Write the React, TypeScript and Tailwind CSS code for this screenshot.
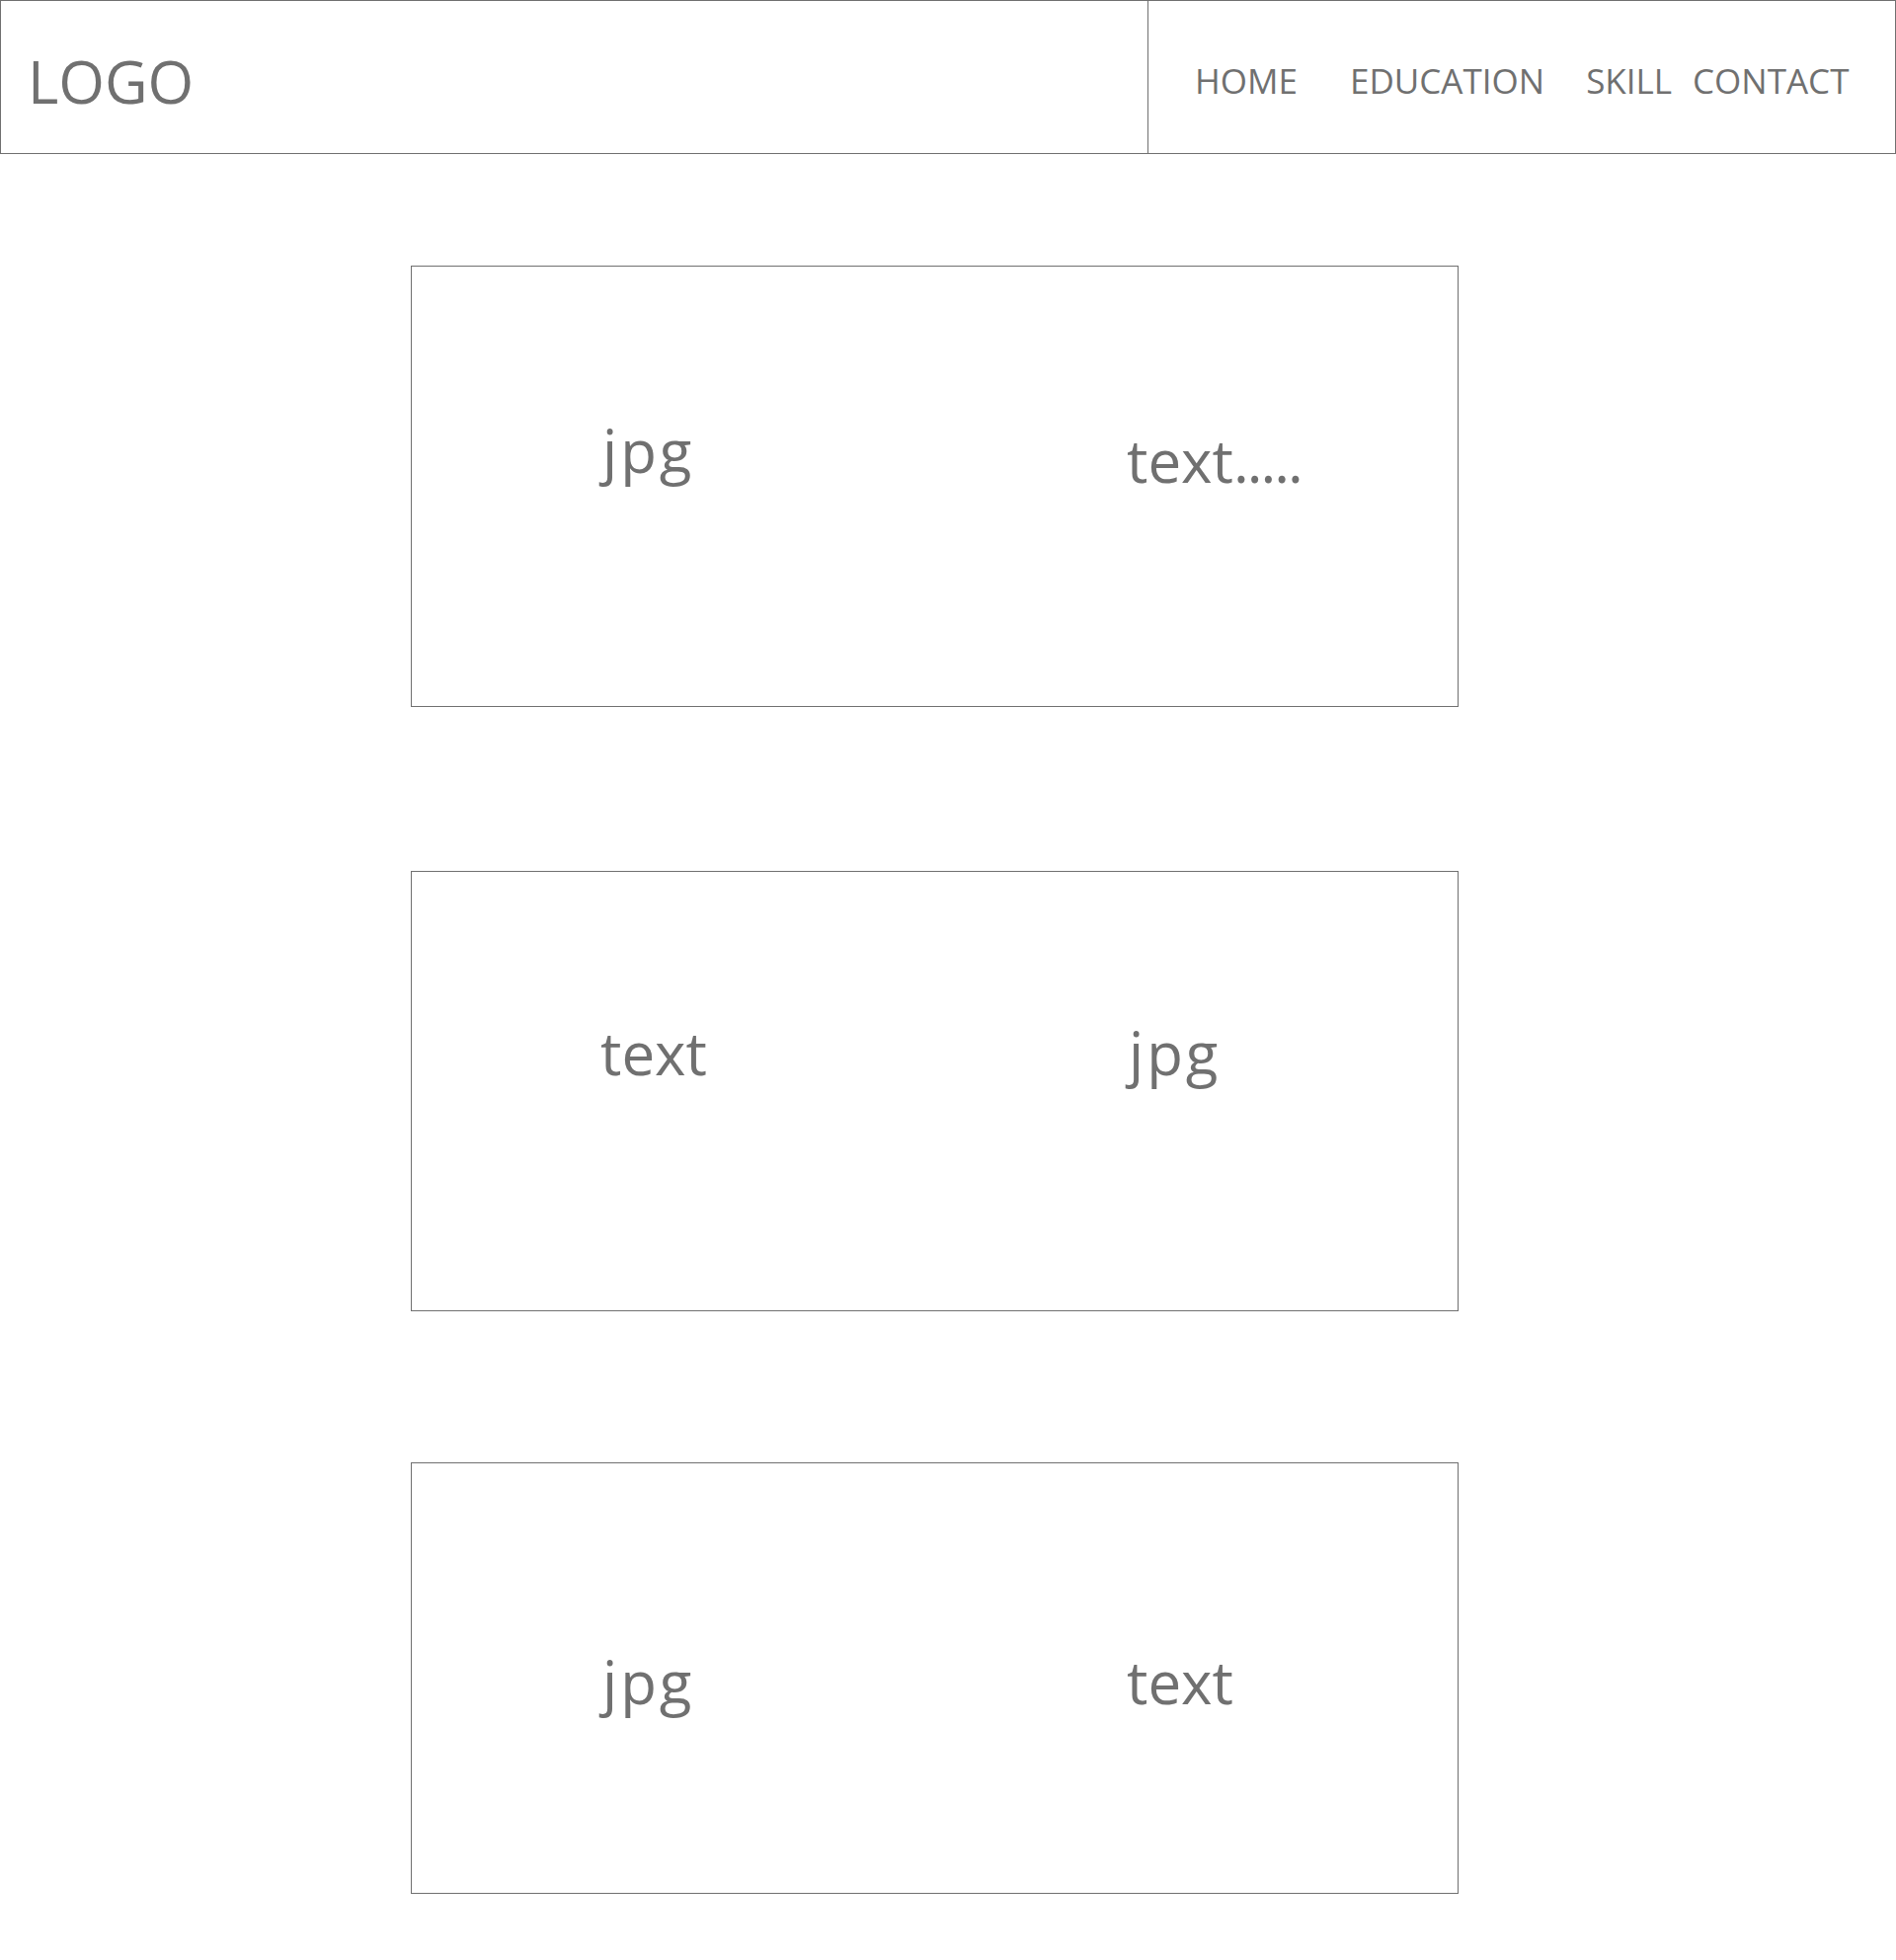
const navItems = [
  { label: "HOME", className: "ml-[47px]" },
  { label: "EDUCATION", className: "ml-[53px]" },
  { label: "SKILL", className: "ml-[42px]" },
  { label: "CONTACT", className: "ml-[21px]" },
];

type Block = {
  left: string;
  right: string;
  leftTop: string;
  rightTop: string;
  height: string;
  margin: string;
};

const blocks: Block[] = [
  { left: "jpg", right: "text.....", leftTop: "mt-[156px]", rightTop: "mt-[166px]", height: "h-[447px]", margin: "mt-[113px]" },
  { left: "text", right: "jpg", leftTop: "mt-[153px]", rightTop: "mt-[153px]", height: "h-[446px]", margin: "mt-[166px]" },
  { left: "jpg", right: "text", leftTop: "mt-[191px]", rightTop: "mt-[191px]", height: "h-[437px]", margin: "mt-[153px]" },
];

// renders "jpg" a bit wider and the trailing dots a bit tighter, like the mockup
const Label = ({ value }: { value: string }) => {
  if (value === "jpg") return <span className="ml-[2px] tracking-[3px]">jpg</span>;
  const dots = value.match(/\.+$/)?.[0] ?? "";
  const word = value.slice(0, value.length - dots.length);
  return (
    <span>
      {word}
      {dots && <span className="tracking-[-2px]">{dots}</span>}
    </span>
  );
};

const App = () => {
  return (
    <div className="min-h-[1985px] w-[1920px] bg-white font-['Open_Sans',sans-serif] text-[#707070]">
      <header className="flex h-[156px] border border-[#707070]">
        <div className="flex w-[1162px] items-center border-r border-[#707070] pl-[27px]">
          <span className="mt-[8px] text-[60px] leading-none">LOGO</span>
        </div>
        <nav className="flex items-center">
          {navItems.map((item) => (
            <span key={item.label} className={`${item.className} mt-[6px] text-[35px] leading-none`}>
              {item.label}
            </span>
          ))}
        </nav>
      </header>

      {blocks.map((b, i) => (
        <section
          key={i}
          className={`${b.margin} ${b.height} ml-[416px] flex w-[1061px] items-start border border-[#707070] pl-[191px]`}
        >
          <div className={`${b.leftTop} w-[533px] text-[60px] leading-none`}>
            <Label value={b.left} />
          </div>
          <div className={`${b.rightTop} text-[60px] leading-none`}>
            <Label value={b.right} />
          </div>
        </section>
      ))}
    </div>
  );
};

export default App;
